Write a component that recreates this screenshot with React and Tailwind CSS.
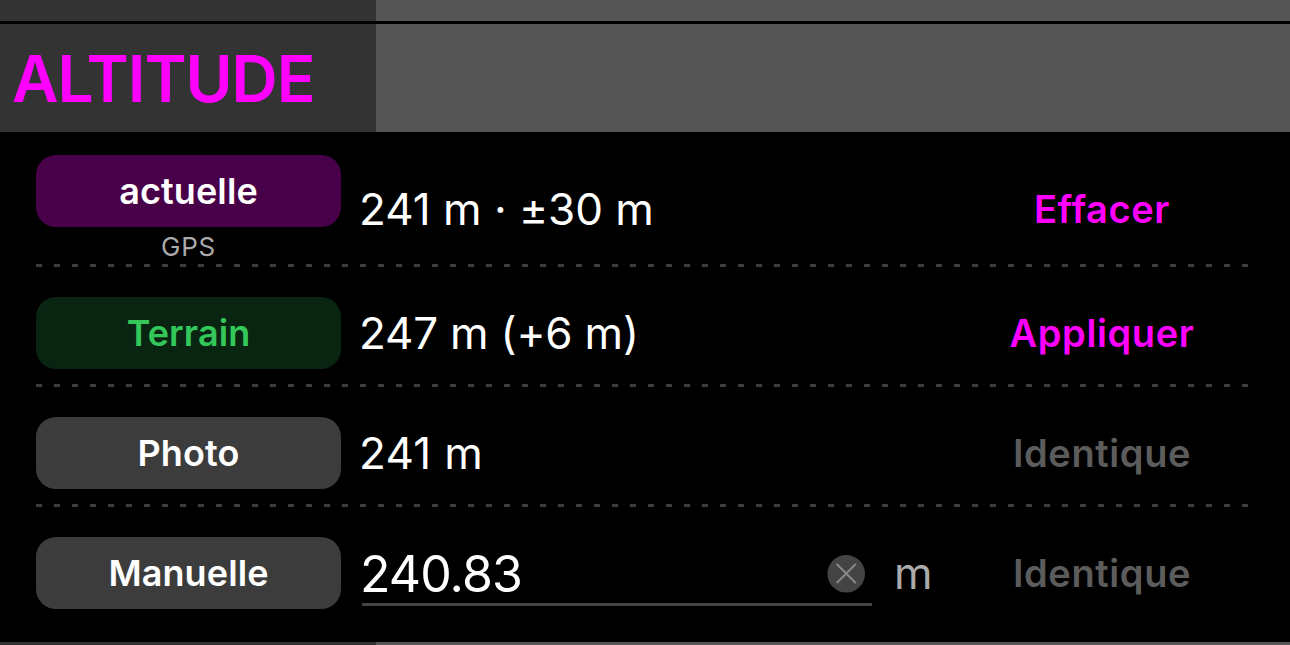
import { clsx } from "clsx";

const ROW_HEIGHT = "h-[117px] pt-[30px]";
const VALUE_TEXT =
  "ml-[18px] text-[44px] leading-[72px] [font-feature-settings:'calt'_0]";

function Divider() {
  return (
    <div className="ml-9 h-[3px] w-[1212px] bg-[repeating-linear-gradient(90deg,#3d3d3d_0px,#3d3d3d_6px,transparent_6px,transparent_18px)]" />
  );
}

function SourceButton({ label, className }) {
  return (
    <button
      className={clsx(
        "flex h-[72px] w-[305px] items-center justify-center rounded-[20px] text-[36px] leading-none font-semibold tracking-[0.1px]",
        className,
      )}
    >
      {label}
    </button>
  );
}

function Action({ label, disabled }) {
  return (
    <button
      disabled={disabled}
      className={clsx(
        "ml-auto flex h-[72px] w-[300px] items-center justify-center text-[38px] leading-none font-semibold tracking-[0.6px]",
        disabled ? "text-[#5c5c5c]" : "text-[#ff00ff]",
      )}
    >
      {label}
    </button>
  );
}

function ClearButton() {
  return (
    <button className="ml-auto size-[38px]">
      <svg viewBox="0 0 38 38" className="size-[38px]">
        <circle cx="19.2" cy="18.8" r="18.8" fill="#444444" />
        <path
          d="M10.2 9.5L28.2 27.5M28.2 9.5L10.2 27.5"
          stroke="#888888"
          strokeWidth="2"
          strokeLinecap="round"
        />
      </svg>
    </button>
  );
}

export default function App() {
  return (
    <div className="h-[645px] w-[1290px] overflow-hidden bg-black font-['Inter',sans-serif] text-white">
      {/* Previous section */}
      <div className="flex h-[21px]">
        <div className="w-[376px] bg-[#333333]" />
        <div className="flex-1 bg-[#555555]" />
      </div>

      {/* Section title */}
      <div className="mt-[3px] flex h-[108px]">
        <div className="flex w-[376px] items-center bg-[#333333] pt-[2px] pl-3">
          <h1 className="text-[64px] leading-none font-semibold tracking-[-1.1px] text-[#ff00ff]">
            ALTITUDE
          </h1>
        </div>
        <div className="flex-1 bg-[#555555]" />
      </div>

      {/* Current position */}
      <div className="flex h-[132px] pr-[38px] pl-9">
        <div className="flex flex-col items-center pt-[23px]">
          <SourceButton label="actuelle" className="bg-[#480048]" />
          <span className="mt-[7px] text-[26px] leading-none tracking-[0.8px] text-[#aaaaaa]">
            GPS
          </span>
        </div>
        <div className="flex flex-1 pt-[41px]">
          <span className={VALUE_TEXT}>241 m · ±30 m</span>
          <Action label="Effacer" />
        </div>
      </div>
      <Divider />

      {/* Terrain model */}
      <div className={clsx("flex pr-[38px] pl-9", ROW_HEIGHT)}>
        <SourceButton label="Terrain" className="bg-[#0a2412] text-[#34c759]" />
        <span className={clsx(VALUE_TEXT, "tracking-[-0.2px]")}>
          247 m (+6 m)
        </span>
        <Action label="Appliquer" />
      </div>
      <Divider />

      {/* Photo metadata */}
      <div className={clsx("flex pr-[38px] pl-9", ROW_HEIGHT)}>
        <SourceButton label="Photo" className="bg-[#3c3c3c]" />
        <span className={clsx(VALUE_TEXT, "tracking-[0.3px]")}>241 m</span>
        <Action label="Identique" disabled />
      </div>
      <Divider />

      {/* Manual entry */}
      <div className="flex h-[135px] pt-[30px] pr-[38px] pl-9">
        <SourceButton label="Manuelle" className="bg-[#3c3c3c]" />
        <div className="ml-[21px] flex h-[69px] w-[510px] items-center border-b-3 border-[#444444] pr-[7px] pt-[7px]">
          <span className="-ml-[2px] text-[50px] leading-none tracking-[-0.9px]">
            240.83
          </span>
          <ClearButton />
        </div>
        <span className="ml-[22px] text-[44px] leading-[72px] text-[#aaaaaa]">
          m
        </span>
        <Action label="Identique" disabled />
      </div>

      {/* Next section */}
      <div className="flex h-[3px]">
        <div className="w-[376px] bg-[#333333]" />
        <div className="flex-1 bg-[#555555]" />
      </div>
    </div>
  );
}
